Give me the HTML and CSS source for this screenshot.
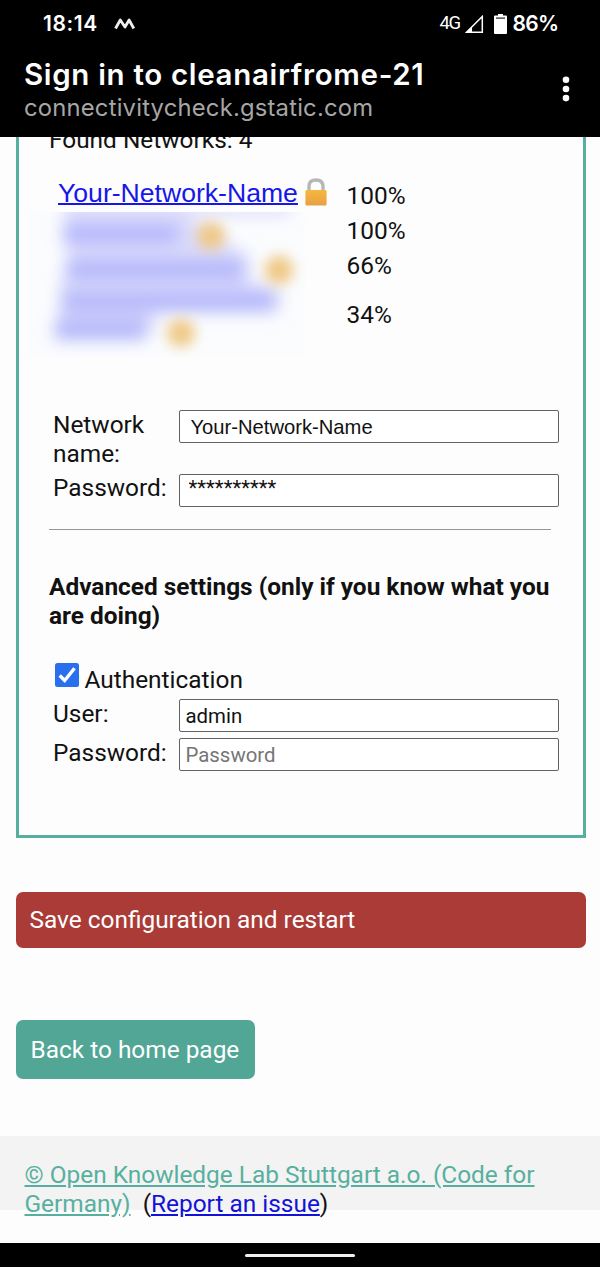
FILE: index.html
```html
<!DOCTYPE html>
<html lang="en">
<head>
<meta charset="utf-8">
<title>Sign in to cleanairfrome-21</title>
<link rel="stylesheet" href="styles.css">
</head>
<body>
<header class="top">
  <div class="status">
    <span class="clock">18:14</span>
    <svg class="notif" width="24" height="16" viewBox="0 0 24 16"><path d="M2.500 13.500 7.300 5 12 12 16.100 5 20.800 13.500" fill="none" stroke="#eee" stroke-width="2.800" stroke-linejoin="round"/></svg>
    <span class="net">4G</span>
    <svg class="signal" width="19" height="19" viewBox="0 0 19 19"><path d="M1.500 17.300H17.300V1.500Z" fill="none" stroke="#fff" stroke-width="1.500"/><path d="M0.500 18 7 11.500V18Z" fill="#fff"/></svg>
    <svg class="battery" width="13" height="20" viewBox="0 0 13 20"><path d="M4 0h5v1.500h3q1 0 1 1v16.500q0 1-1 1H1q-1 0-1-1V2.500q0-1 1-1h3Z" fill="#fff"/><path d="M2 3.500h9v1.200h-9Z" fill="#222"/></svg>
    <span class="percent">86%</span>
  </div>
  <div class="bar">
    <div class="titles">
      <h1 class="title"><span>Sign in to cleanairfrome-21</span></h1>
      <div class="host"><span>connectivitycheck.gstatic.com</span></div>
    </div>
    <svg class="more" width="8" height="26" viewBox="0 0 8 26"><g fill="#fff"><circle cx="4" cy="3.800" r="3.300"/><circle cx="4" cy="13" r="3.300"/><circle cx="4" cy="22.100" r="3.300"/></g></svg>
  </div>
</header>
<main class="page">
  <section class="panel">
    <div class="found">Found Networks: 4</div>
    <div class="networks">
      <div class="names">
        <div class="first"><a class="ssid" href="#">Your-Network-Name</a>
          <svg class="lock" width="22" height="28" viewBox="0 0 22 28"><defs><linearGradient id="body" x2="0" y2="1"><stop stop-color="#f5b83e"/><stop offset="1" stop-color="#e9a044"/></linearGradient></defs><path d="M4 13V8.500Q4 2 11 2T18 8.500V13" fill="none" stroke="#b7b7b5" stroke-width="3.400"/><rect x="0.400" y="12" width="21.200" height="15.400" rx="1.500" fill="url(#body)"/></svg>
        </div>
        <svg class="hidden-names" width="290" height="147" viewBox="0 0 290 147"><defs><filter id="soft" x="-30%" y="-50%" width="160%" height="200%"><feGaussianBlur stdDeviation="8"/></filter><filter id="soft2" x="-50%" y="-50%" width="200%" height="200%"><feGaussianBlur stdDeviation="6.500"/></filter></defs>
          <path d="M2 0H280V144H2Z" fill="#fafcfe"/>
          <g filter="url(#soft)"><path fill="#dadafc" d="M38 -8H265V3H160L225 45V70L255 75V100H130V122H34V80L43 35Z"/><path fill="#b6b9fa" d="M38 12H153V32H38ZM43 47H218V68H43ZM38 79H249V100H38ZM30 107H120V128H30Z"/></g>
          <g fill="#f0c987" filter="url(#soft2)"><circle cx="186" cy="24" r="14"/><circle cx="254" cy="58" r="14.500"/><circle cx="156" cy="121" r="14"/></g>
        </svg>
      </div>
      <ul class="levels"><li>100%</li><li>100%</li><li>66%</li><li class="last">34%</li></ul>
    </div>
    <div class="form wifi">
      <label class="label">Network name:</label><input class="field sans" value="Your-Network-Name">
      <label class="label">Password:</label><input class="field stars" value="**********">
    </div>
    <hr class="rule">
    <h2 class="heading">Advanced settings (only if you know what you are doing)</h2>
    <label class="auth"><svg class="check" width="24" height="24" viewBox="0 0 24 24"><rect width="24" height="24" rx="2.500" fill="#2870ee"/><path d="M4.700 12.500 9.700 17.500 19.500 5.300" fill="none" stroke="#fff" stroke-width="3.400"/></svg><span>Authentication</span></label>
    <div class="form login">
      <label class="label">User:</label><input class="field" value="admin">
      <label class="label">Password:</label><input class="field" placeholder="Password">
    </div>
  </section>
  <button class="save">Save configuration and restart</button>
  <a class="back" href="#">Back to home page</a>
  <footer class="footer"><a class="credit" href="#">© Open Knowledge Lab Stuttgart a.o. (Code for<br>Germany)</a>&nbsp; (<a class="report" href="#">Report an issue</a>)</footer>
</main>
<nav class="gesture"><span class="pill"></span></nav>
</body>
</html>
```
FILE: styles.css
```css
* { box-sizing: border-box; }
body {
  margin: 0;
  width: 600px;
  height: 1267px;
  overflow: hidden;
  display: flex;
  flex-direction: column;
  background: #fdfdfd;
  color: #111;
  font: 24.420px/29px Roboto, sans-serif;
}
.top { height: 137px; flex: none; background: #000; color: #fff; font-family: Inter, sans-serif; }
.status { height: 46px; padding: 0 43px; display: flex; align-items: center; font-size: 21px; font-weight: 600; }
.clock { width: 70px; letter-spacing: 0.600px; }
.notif { flex: none; }
.net { margin-left: auto; font: 18.500px Roboto, sans-serif; letter-spacing: -1.500px; margin-right: 5px; }
.signal { margin-top: 3px; margin-right: 10px; }
.battery { margin-right: 6px; margin-top: 2px; }
.percent { width: 44.500px; letter-spacing: -0.700px; white-space: nowrap; }
.bar { padding: 10px 30px 0 24px; display: flex; justify-content: space-between; }
.title { margin: 0; font-size: 29.500px; line-height: 36px; font-weight: 600; letter-spacing: 0.670px; white-space: nowrap; }
.host { color: #a6a6a6; font-size: 23.800px; line-height: 32px; letter-spacing: 0.200px; white-space: nowrap; }
.more { margin-top: 20px; }
.page { height: 1106px; flex: none; overflow: hidden; }
.panel { display: flow-root; margin: 0 14.500px 0 15.500px; height: 701px; border: solid #57b09f; border-width: 0 3px 3px; padding: 0 24px 0 30.500px; }
.found { height: 29px; margin-top: -12px; }
.networks { display: flex; height: 213px; margin-top: 23px; }
.names { width: 322px; margin-left: -24px; flex: none; margin-right: -24px; }
.first { height: 35px; padding-left: 33px; display: flex; align-items: flex-start; }
.ssid { margin-top: 2px; color: #1717e8; font: 26.600px/29px "Liberation Sans", Arial, sans-serif; margin-right: 7px; text-decoration-thickness: 2px; white-space: nowrap; }
.lock { flex: none; margin-top: 1px; }
.hidden-names { display: block; overflow: hidden; }
.levels { margin: 0 0 0 23.500px; padding: 4px 0 0; list-style: none; }
.levels li { height: 35px; }
.levels .last { padding-top: 14px; }
.form { display: grid; grid-template-columns: 125.500px 380px; padding-left: 4px; }
.wifi { grid-template-rows: 63.500px 33px; margin-top: 20px; }
.wifi .label { margin-top: -0.500px; }
.field { width: 380px; height: 33px; border: 1px solid #626262; border-radius: 2px; padding: 0 6px; background: #fff; color: #111; font: 20.400px Roboto, sans-serif; }
.field::placeholder { color: #757575; }
.sans { font-family: "Liberation Sans", Arial, sans-serif; font-size: 20.200px; padding: 1px 11px 0; }
.stars { padding: 0 9px 4px; }
.rule { margin: 22.500px 8px 0 0; border: 0; border-top: 1px solid #969696; }
.heading { margin: 42px -6px 0 0; font-size: 24.420px; line-height: 29px; }
.auth { display: flex; margin: 33px 0 0 6px; height: 36px; gap: 5.500px; }
.check { flex: none; }
.auth span { padding-top: 2px; }
.login { grid-template-rows: 39px 33px; }
.login .label { margin-top: -0.500px; }
.save { display: block; width: 570px; height: 56px; margin: 53.500px 0 0 15.500px; padding: 0 14px 1px; border: 0; border-radius: 7px; background: #aa3b36; color: #fff; font: 24.420px Roboto, sans-serif; text-align: left; }
.back { display: block; width: 239.500px; height: 59px; margin: 72px 0 0 15.500px; padding: 0 15px; border-radius: 7px; background: #52a696; color: #fff; line-height: 59px; text-decoration: none; white-space: nowrap; }
.footer { height: 74px; margin-top: 57.500px; background: #f3f3f3; padding: 24px 24.500px 0; white-space: nowrap; }
.credit { color: #57b09f; }
.report { color: #1212d8; }
.gesture { height: 24px; flex: none; background: #000; display: flex; align-items: center; justify-content: center; }
.pill { width: 110px; height: 3.500px; border-radius: 2px; background: #eee; margin-top: 1px; }
```
